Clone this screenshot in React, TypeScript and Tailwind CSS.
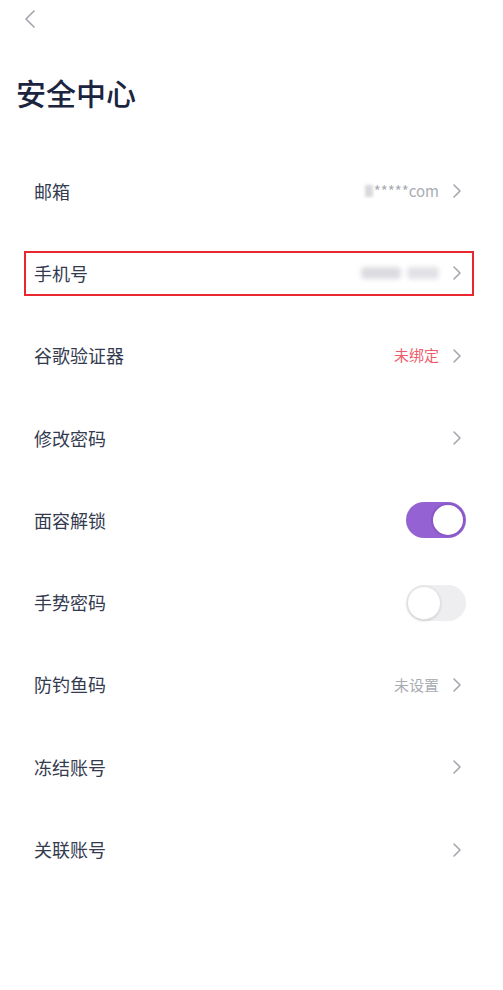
import React from 'react';

type Row = {
  label: string;
  kind: 'link' | 'toggle';
  value?: React.ReactNode;
  on?: boolean;
  boxed?: boolean;
};

const Chevron = () => (
  <svg width="10" height="16" viewBox="0 0 10 16" fill="none" className="shrink-0">
    <path d="M2 2l6 6-6 6" stroke="#a4a7ae" strokeWidth="1.6" strokeLinecap="round" strokeLinejoin="round" />
  </svg>
);

const Toggle = ({ on }: { on?: boolean }) =>
  on ? (
    <div className="w-[60px] h-[36px] rounded-full bg-[#9462d2] flex items-center justify-end pr-[1px]">
      <div className="w-[34px] h-[34px] rounded-full bg-white border-2 border-[#8a58c8]" />
    </div>
  ) : (
    <div className="w-[60px] h-[36px] rounded-full bg-[#eeedf0] flex items-center pl-[1px]">
      <div className="w-[34px] h-[34px] rounded-full bg-white border border-[#e2e1e5] shadow-sm" />
    </div>
  );

const rows: Row[] = [
  {
    label: '邮箱',
    kind: 'link',
    value: (
      <span className="flex items-center text-[15px] text-[#a9acb3]">
        <span className="inline-block w-[8px] h-[12px] bg-[#d9d9dd] blur-[1.5px] mr-[1px]" />
        *****com
      </span>
    ),
  },
  {
    label: '手机号',
    kind: 'link',
    boxed: true,
    value: (
      <span className="flex items-center gap-[6px]">
        <span className="inline-block w-[40px] h-[12px] rounded-sm bg-[#dcdce0] blur-[2.5px]" />
        <span className="inline-block w-[32px] h-[12px] rounded-sm bg-[#e2e2e6] blur-[2.5px]" />
      </span>
    ),
  },
  { label: '谷歌验证器', kind: 'link', value: <span className="text-[15px] text-[#ee5d6c]">未绑定</span> },
  { label: '修改密码', kind: 'link' },
  { label: '面容解锁', kind: 'toggle', on: true },
  { label: '手势密码', kind: 'toggle', on: false },
  { label: '防钓鱼码', kind: 'link', value: <span className="text-[15px] text-[#a9acb3]">未设置</span> },
  { label: '冻结账号', kind: 'link' },
  { label: '关联账号', kind: 'link' },
];

export default function App() {
  return (
    <div
      className="w-[503px] h-[990px] bg-white overflow-hidden"
      style={{ fontFamily: '"Noto Sans CJK SC", "Noto Sans", sans-serif' }}
    >
      <div className="h-[38px] pl-[24px] flex items-center">
        <svg width="12" height="20" viewBox="0 0 12 20" fill="none">
          <path d="M10 2L2 10l8 8" stroke="#a0a3ab" strokeWidth="1.6" strokeLinecap="round" strokeLinejoin="round" />
        </svg>
      </div>
      <h1 className="mt-[33px] pl-[16px] text-[30px] leading-[42px] font-medium text-[#1c2540]">安全中心</h1>
      <div className="mt-[37px]">
        {rows.map((row) => (
          <div key={row.label} className="relative h-[82.3px] pl-[34px] pr-[41px] flex items-center justify-between">
            {row.boxed && (
              <div className="absolute left-[24px] right-[29px] top-[19px] h-[45px] border-2 border-[#e8272e]" />
            )}
            <span className="text-[18px] text-[#343b4f]">{row.label}</span>
            {row.kind === 'link' ? (
              <div className="flex items-center gap-[13px]">
                {row.value}
                <Chevron />
              </div>
            ) : (
              <div className="-mr-[4px]">
                <Toggle on={row.on} />
              </div>
            )}
          </div>
        ))}
      </div>
    </div>
  );
}
